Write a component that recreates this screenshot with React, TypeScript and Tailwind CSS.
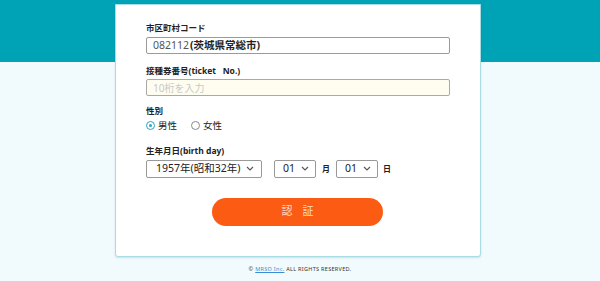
import React from "react";

const Chevron = () => (
  <svg width="8" height="5" viewBox="0 0 8 5" fill="none" stroke="#555" strokeWidth="1.1" className="shrink-0">
    <path d="M1 1l3 3 3-3" />
  </svg>
);

export default function App() {
  const font = { fontFamily: '"Noto Sans", "Noto Sans CJK JP", sans-serif' };
  return (
    <div className="relative w-[600px] h-[281px] bg-[#f1fafd] overflow-hidden" style={font}>
      <div className="absolute left-0 top-0 w-full h-[62px] bg-[#00a3b5]" />
      <div className="relative flex flex-col items-center">
        <div className="mt-[4px] -ml-[4px] w-[366px] h-[253px] bg-white border border-[#a9dde6] rounded-b-[3px] shadow-[0_1px_2px_rgba(0,0,0,0.12)] pl-[30px] pr-[30px] pt-[17px]">
          <div className="text-[8.5px] font-bold text-[#222] leading-[12px]">市区町村コード</div>
          <div className="mt-[3px] h-[17px] w-[304px] border border-[#9a9a9a] rounded-[2px] flex items-center pl-[6px] text-[10.5px] leading-none">
            <span className="text-[#555]">082112</span>
            <span className="font-bold text-[#222] ml-[1px]">(茨城県常総市)</span>
          </div>
          <div className="mt-[11px] text-[8.5px] font-bold text-[#222] leading-[12px]">接種券番号(ticket&nbsp;&nbsp;&nbsp;No.)</div>
          <div className="mt-[2px] h-[17px] w-[304px] border border-[#a9a9a9] rounded-[2px] bg-[#fffdf0] flex items-center pl-[6px] text-[10px] text-[#c8c8c8] leading-none">
            10桁を入力
          </div>
          <div className="mt-[9px] text-[8.5px] font-bold text-[#222] leading-[12px]">性別</div>
          <div className="mt-[4px] flex items-center text-[9.5px] text-[#222] leading-none">
            <span className="w-[9px] h-[9px] rounded-full border border-[#2aa6c0] flex items-center justify-center mr-[3px]">
              <span className="w-[3px] h-[3px] rounded-full bg-[#2aa6c0]" />
            </span>
            男性
            <span className="ml-[14px] w-[9px] h-[9px] rounded-full border border-[#888] mr-[3px]" />
            女性
          </div>
          <div className="mt-[14px] text-[8.5px] font-bold text-[#222] leading-[12px]">生年月日(birth day)</div>
          <div className="mt-[3px] flex items-center text-[10.5px] text-[#222] leading-none whitespace-nowrap">
            <div className="w-[116px] h-[18px] border border-[#999] rounded-[2px] flex items-center justify-between pl-[9px] pr-[7px]">
              <span>1957年(昭和32年)</span>
              <Chevron />
            </div>
            <div className="ml-[12px] w-[42px] h-[18px] border border-[#999] rounded-[2px] flex items-center justify-between pl-[8px] pr-[6px]">
              <span>01</span>
              <Chevron />
            </div>
            <span className="ml-[6px] text-[8px] font-bold">月</span>
            <div className="ml-[6px] w-[42px] h-[18px] border border-[#999] rounded-[2px] flex items-center justify-between pl-[8px] pr-[6px]">
              <span>01</span>
              <Chevron />
            </div>
            <span className="ml-[5px] text-[8px] font-bold">日</span>
          </div>
          <div className="mt-[20px] flex pl-[66px]">
            <div className="w-[171px] h-[28px] rounded-full bg-[#fc5b13] flex items-center justify-center text-[#ffd9c6] text-[11px] tracking-[10px] pl-[10px]">
              認証
            </div>
          </div>
        </div>
        <div className="mt-[10px] text-[5.5px] tracking-[0.3px] text-[#333] leading-none">
          © <span className="text-[#3a8fd0] underline">MRSO Inc.</span> ALL RIGHTS RESERVED.
        </div>
      </div>
    </div>
  );
}
